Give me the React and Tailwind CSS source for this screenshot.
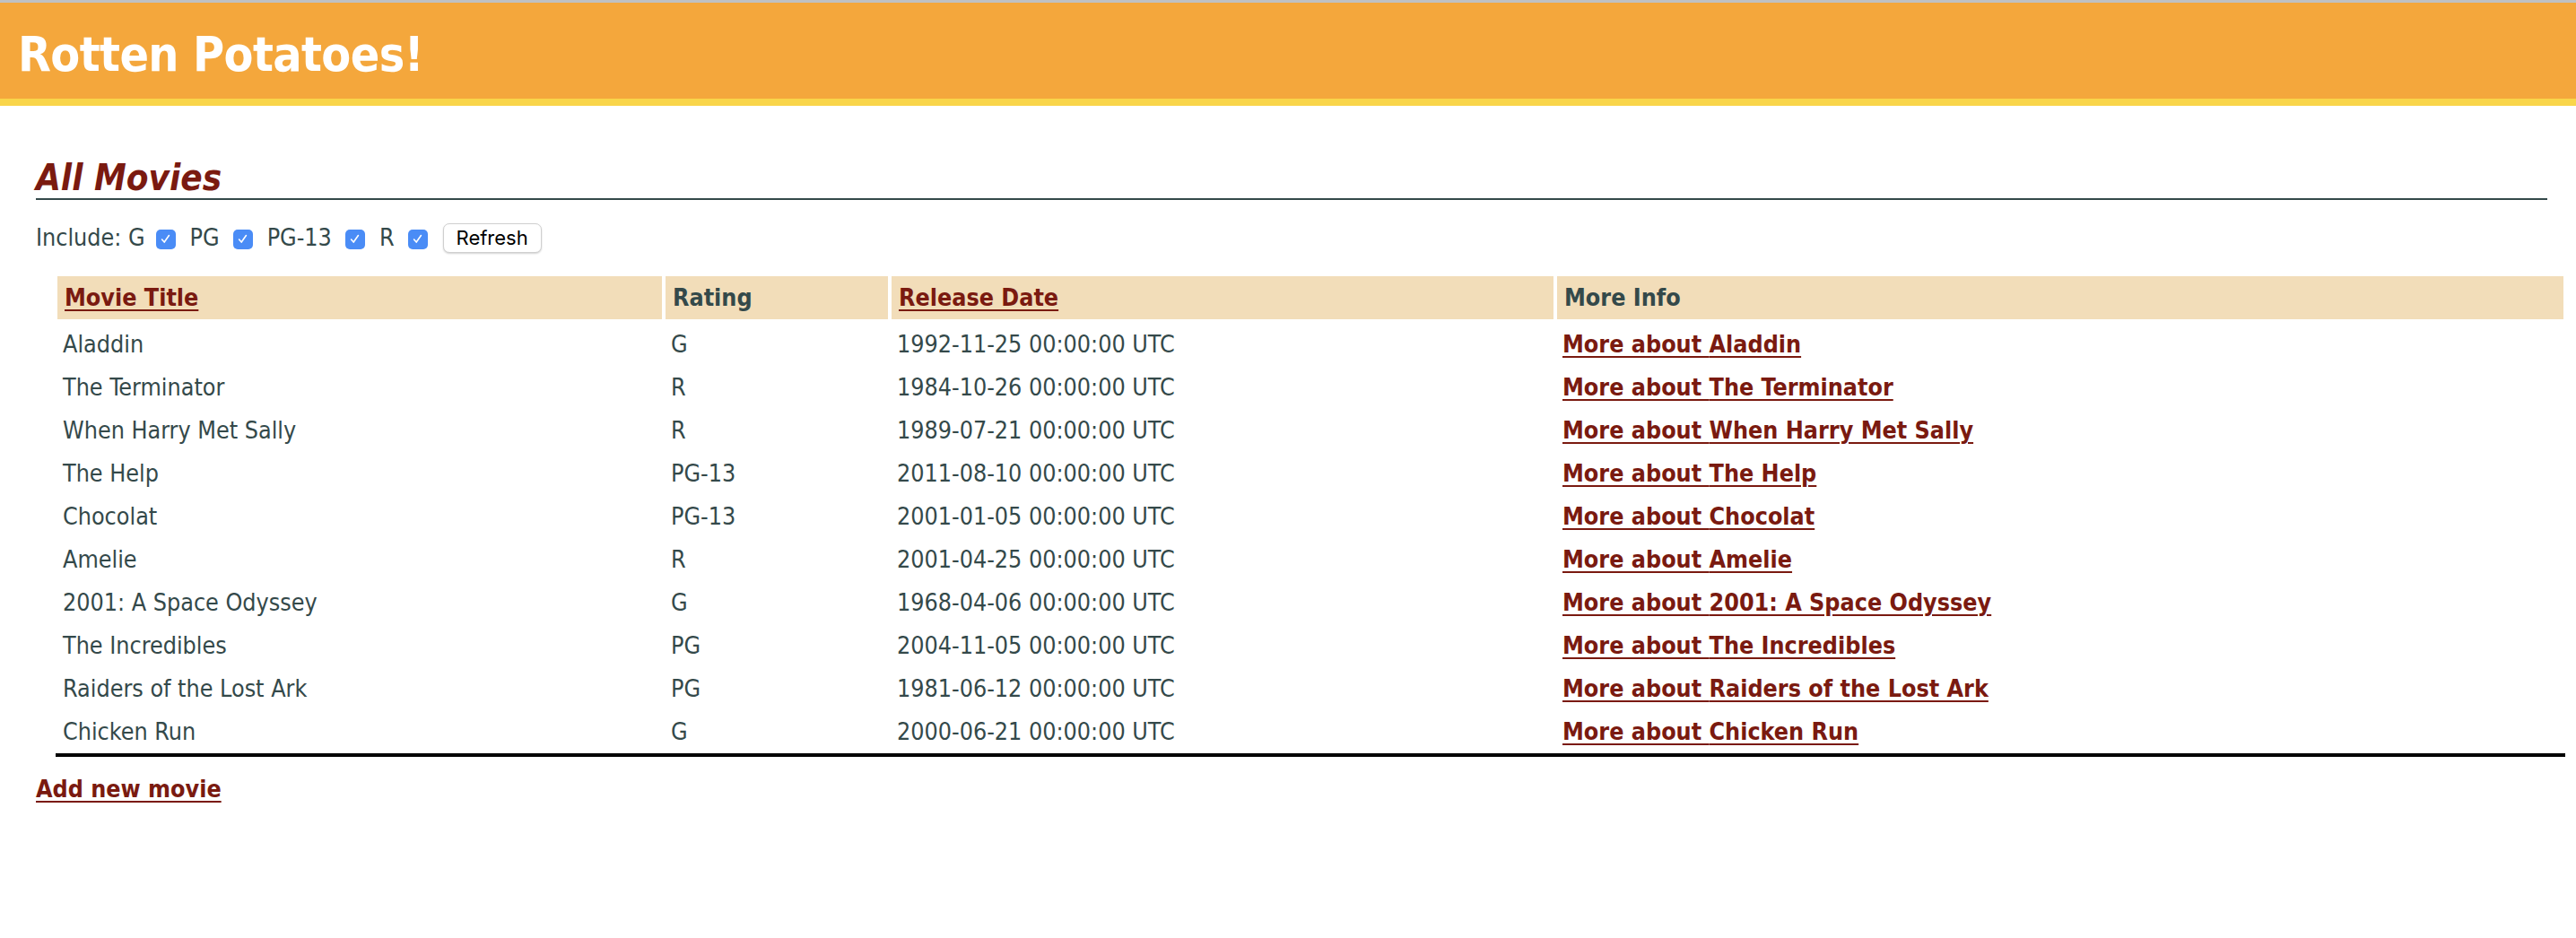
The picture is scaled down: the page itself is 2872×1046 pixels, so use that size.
import React from "react";

const movies = [
    ["Aladdin", "G", "1992-11-25 00:00:00 UTC"],
    ["The Terminator", "R", "1984-10-26 00:00:00 UTC"],
    ["When Harry Met Sally", "R", "1989-07-21 00:00:00 UTC"],
    ["The Help", "PG-13", "2011-08-10 00:00:00 UTC"],
    ["Chocolat", "PG-13", "2001-01-05 00:00:00 UTC"],
    ["Amelie", "R", "2001-04-25 00:00:00 UTC"],
    ["2001: A Space Odyssey", "G", "1968-04-06 00:00:00 UTC"],
    ["The Incredibles", "PG", "2004-11-05 00:00:00 UTC"],
    ["Raiders of the Lost Ark", "PG", "1981-06-12 00:00:00 UTC"],
    ["Chicken Run", "G", "2000-06-21 00:00:00 UTC"],
];

function Check() {
    return (
        <span className="inline-flex w-[22px] h-[22px] rounded-[5px] bg-[#4a8cf6] items-center justify-center shrink-0">
            <svg viewBox="0 0 16 16" className="w-[15px] h-[15px]">
                <path d="M3.8 8.6 L6.6 11.8 L12.2 3.8" fill="none" stroke="white" strokeWidth="1.7" strokeLinecap="round" strokeLinejoin="round" />
            </svg>
        </span>
    );
}

const linkCls = "text-[#7a1a10] font-bold underline decoration-[2px] underline-offset-[4px]";

export default function App() {
    return (
        <div className="min-h-screen bg-white text-[#34494a] font-['DejaVu_Sans_Condensed','DejaVu_Sans',sans-serif] font-stretch-condensed text-[26.67px] leading-[32px]">
            <div className="border-t-[3px] border-[#bfc1c3]">
                <h1 className="h-[115px] box-border bg-[#f4a73c] border-b-[8px] border-[#f9d54a] pl-[20px] pt-[31px] text-white font-bold text-[53.33px] leading-[53px] tracking-[-0.6px]">
                    Rotten Potatoes!
                </h1>
            </div>

            <div className="pl-[40px] pr-[32px] pb-[40px]">
                <h1 className="mt-[58px] text-[40px] leading-[45px] italic font-bold text-[#7a1a10] border-b-2 border-[#34494a]">
                    All Movies
                </h1>

                <form className="mt-[25px] flex items-center h-[34px]">
                    <span>Include: G</span>
                    <span className="ml-[12px]"><Check /></span>
                    <span className="ml-[16px]">PG</span>
                    <span className="ml-[15px]"><Check /></span>
                    <span className="ml-[16px]">PG-13</span>
                    <span className="ml-[15px]"><Check /></span>
                    <span className="ml-[16px]">R</span>
                    <span className="ml-[15px]"><Check /></span>
                    <button
                        type="button"
                        className="ml-[17px] h-[33px] px-[14px] rounded-[7px] border border-[#cfcfcf] bg-white shadow-[0_1px_2px_rgba(0,0,0,0.18)] text-[22px] leading-[22px] text-black font-['Inter',sans-serif] font-stretch-normal"
                    >
                        Refresh
                    </button>
                </form>

                <table className="mt-[22px] ml-[20px] w-[2798px] table-fixed border-collapse border-b-4 border-black">
                    <colgroup>
                        <col className="w-[678px]" />
                        <col className="w-[252px]" />
                        <col className="w-[742px]" />
                        <col className="w-[1126px]" />
                    </colgroup>
                    <thead>
                    <tr>
                        <th className="border-4 border-white bg-[#f2ddb9] p-[8px] text-left font-bold">
                            <a href="#" className={linkCls}>Movie Title</a>
                        </th>
                        <th className="border-4 border-white bg-[#f2ddb9] p-[8px] text-left font-bold">Rating</th>
                        <th className="border-4 border-white bg-[#f2ddb9] p-[8px] text-left font-bold">
                            <a href="#" className={linkCls}>Release Date</a>
                        </th>
                        <th className="border-4 border-white bg-[#f2ddb9] p-[8px] text-left font-bold">More Info</th>
                    </tr>
                    </thead>
                    <tbody>
                    {movies.map(([title, rating, date]) => (
                        <tr key={title}>
                            <td className="p-[8px]">{title}</td>
                            <td className="p-[8px]">{rating}</td>
                            <td className="p-[8px]">{date}</td>
                            <td className="p-[8px]">
                                <a href="#" className={linkCls}>More about {title}</a>
                            </td>
                        </tr>
                    ))}
                    </tbody>
                </table>

                <div className="mt-[20px]">
                    <a href="#" className={linkCls}>Add new movie</a>
                </div>
            </div>
        </div>
    );
}
